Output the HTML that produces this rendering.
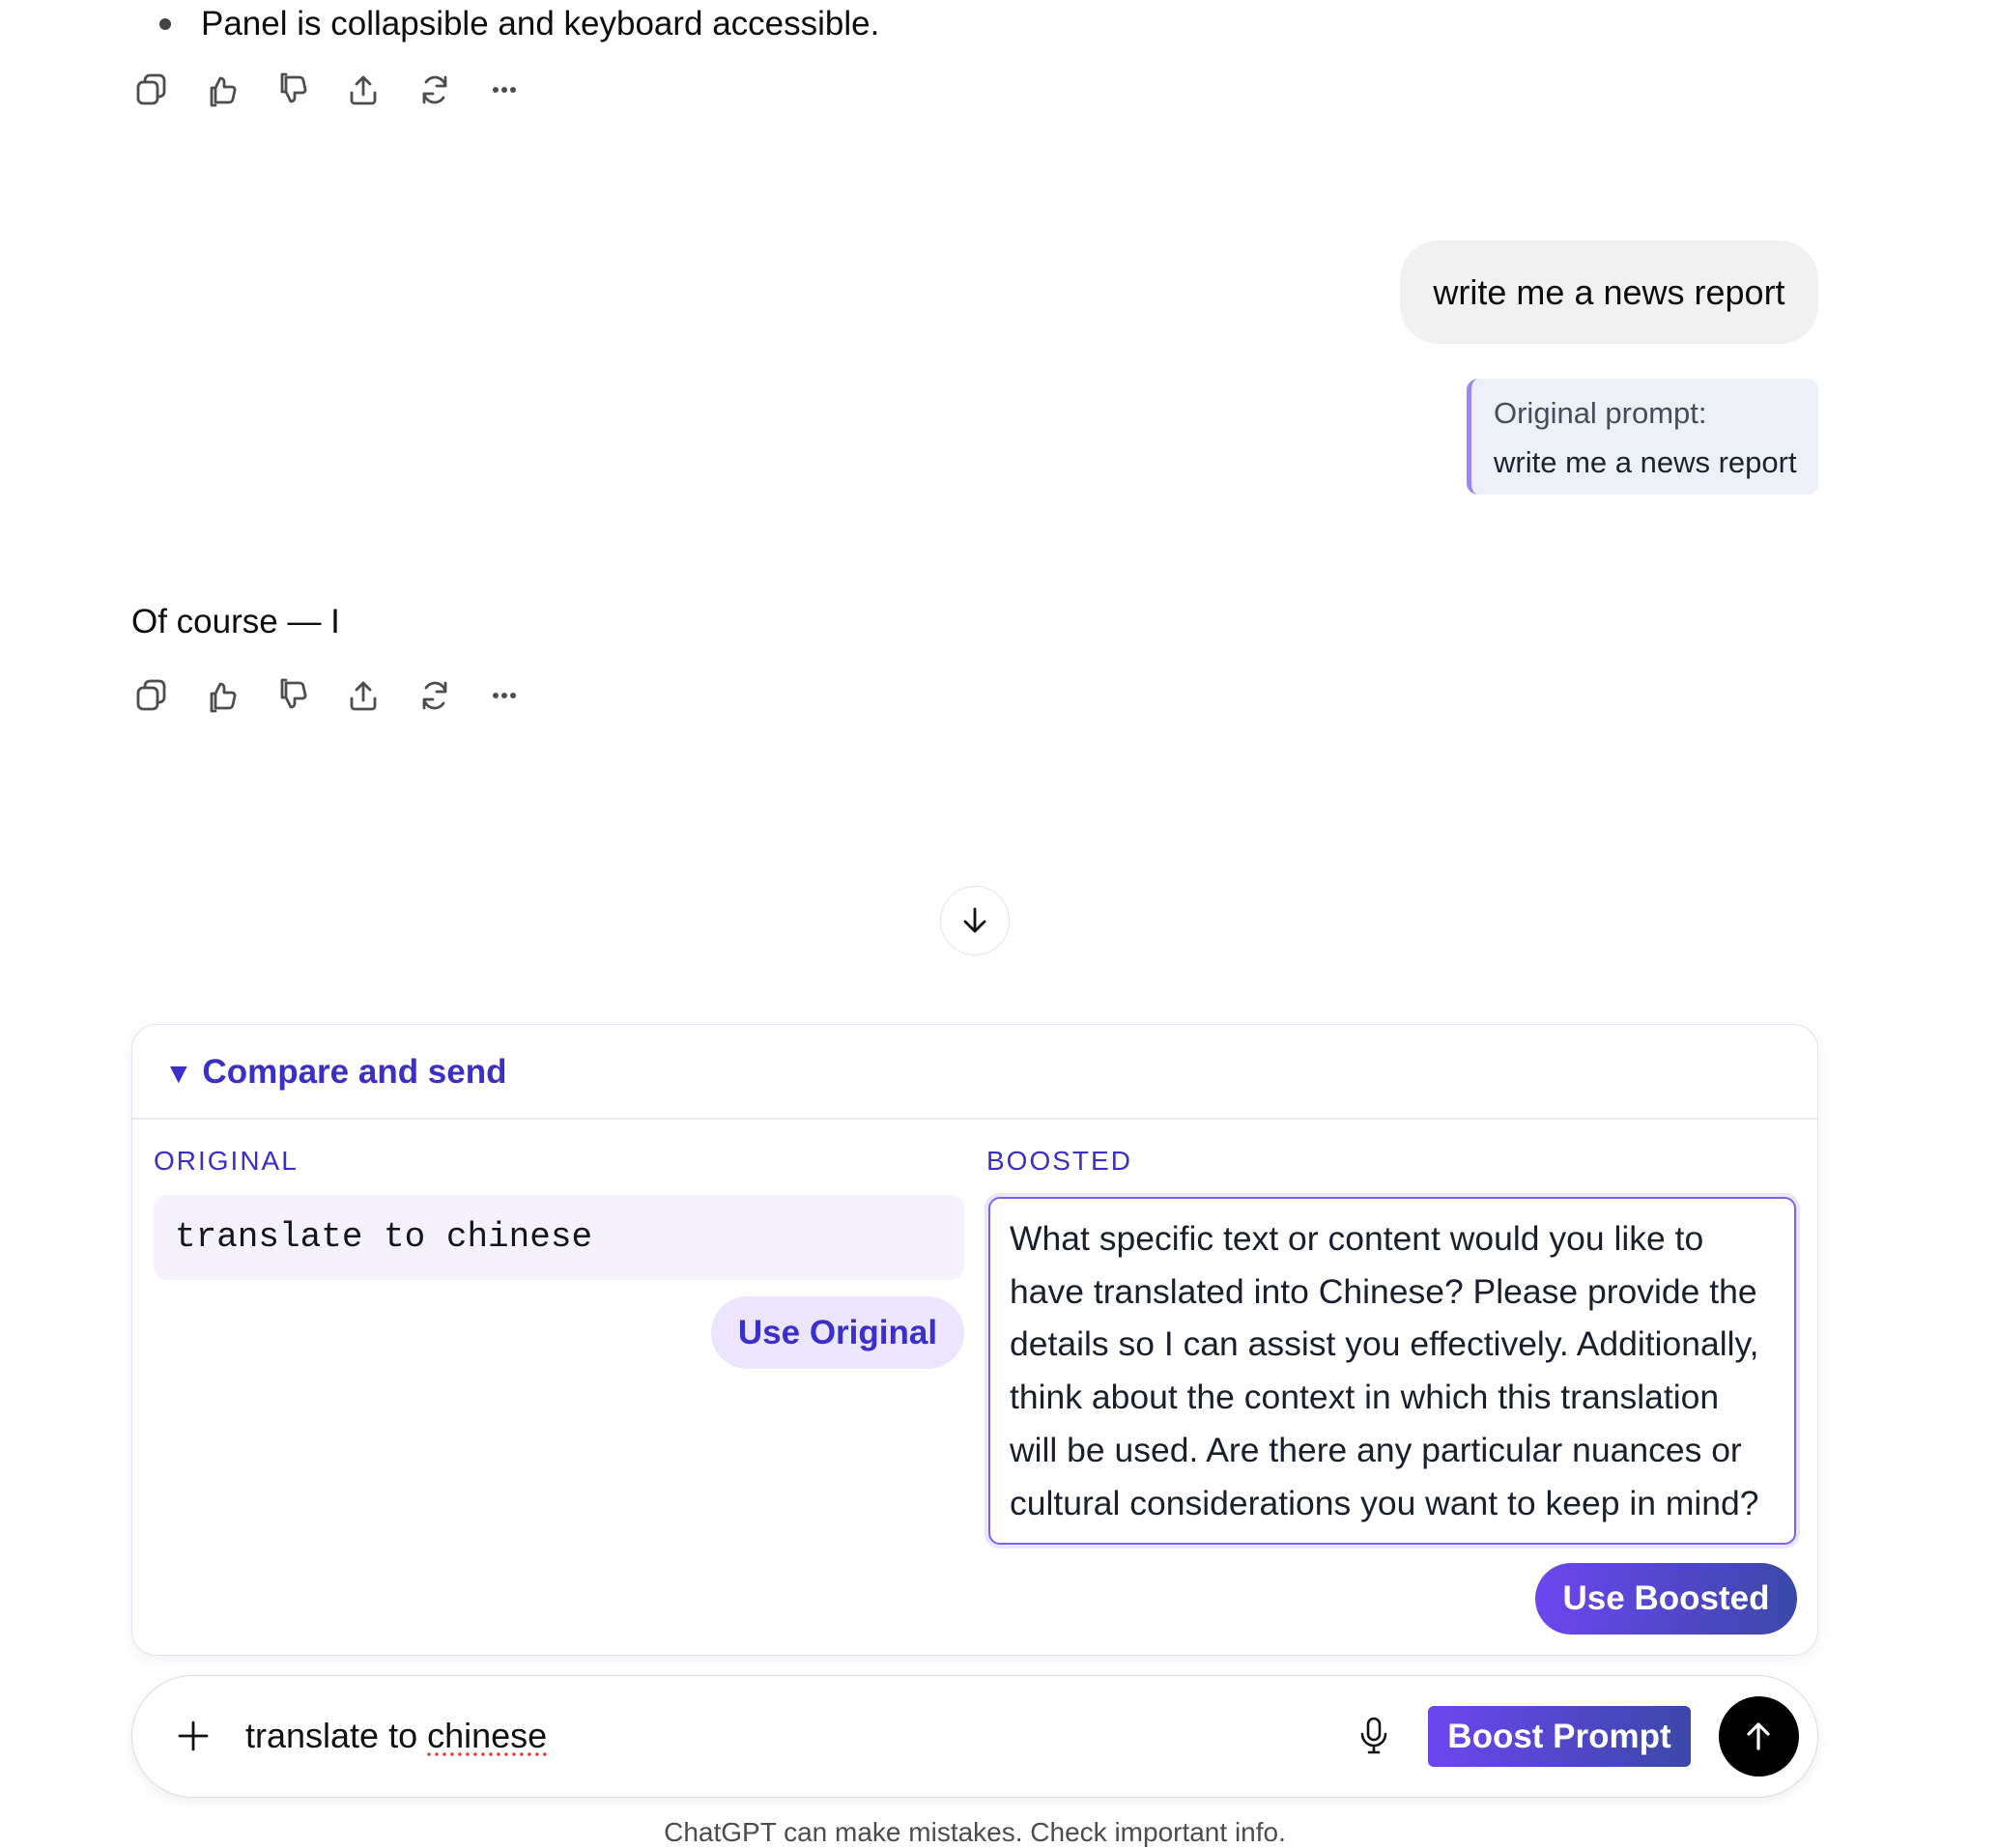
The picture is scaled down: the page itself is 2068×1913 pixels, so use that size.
<!DOCTYPE html>
<html><head><meta charset="utf-8"><style>
*{margin:0;padding:0;box-sizing:border-box}
body{width:2068px;height:1908px;background:#fff;font-family:"Liberation Sans",sans-serif;position:relative;overflow:hidden;color:#0d0d0d}
.a{position:absolute;white-space:nowrap}
.ic{position:absolute;width:38px;height:38px}
.ic svg{width:38px;height:38px;fill:none;stroke:#4d4d4d;stroke-width:2.8;stroke-linecap:round;stroke-linejoin:round}
</style></head><body>

<div class="a" style="left:165px;top:19px;width:12px;height:12px;border-radius:50%;background:#444"></div>
<div class="a" style="left:208px;top:5px;font-size:35px;line-height:40px">Panel is collapsible and keyboard accessible.</div>

<div id="r1"></div>

<div class="a" style="left:1449px;top:249px;width:433px;height:107px;border-radius:40px;background:#f1f1f1;font-size:36px;line-height:107px;text-align:center">write me a news report</div>

<div class="a" style="left:1518px;top:392px;width:364px;height:120px;border-radius:12px;background:#eef0f8;border-left:5px solid #9c86f2"></div>
<div class="a" style="left:1546px;top:410px;font-size:31px;line-height:36px;color:#454c5b">Original prompt:</div>
<div class="a" style="left:1546px;top:461px;font-size:31px;line-height:36px;color:#1c2230">write me a news report</div>

<div class="a" style="left:136px;top:624px;font-size:35px;line-height:40px">Of course — I</div>

<div class="a" style="left:973px;top:917px;width:72px;height:72px;border-radius:50%;border:1.5px solid #e3e3e3;background:#fff"></div>
<svg class="a" style="left:991px;top:935px" width="36" height="36" viewBox="0 0 36 36" fill="none" stroke="#111" stroke-width="2.8" stroke-linecap="round" stroke-linejoin="round"><path d="M18 6v23M8 19l10 10 10-10"/></svg>

<div class="a" style="left:136px;top:1060px;width:1746px;height:654px;border-radius:26px;border:1.5px solid #e4e2f3;background:#fff;box-shadow:0 4px 14px rgba(0,0,0,0.06)"></div>
<div class="a" style="left:137px;top:1157px;width:1744px;height:1.5px;background:#e9e7f7"></div>
<div class="a" style="left:170px;top:1089px;font-size:35px;line-height:42px;font-weight:bold;color:#3a2fc8"><span style="font-size:30px">▼</span> Compare and send</div>
<div class="a" style="left:159px;top:1186px;font-size:28px;line-height:32px;letter-spacing:2px;color:#3a2fc8">ORIGINAL</div>
<div class="a" style="left:1021px;top:1186px;font-size:28px;line-height:32px;letter-spacing:2px;color:#3a2fc8">BOOSTED</div>

<div class="a" style="left:159px;top:1237px;width:839px;height:88px;border-radius:14px;background:#f5f2fe"></div>
<div class="a" style="left:181px;top:1259px;font-family:'Liberation Mono',monospace;font-size:36px;line-height:44px;color:#15151f">translate to chinese</div>
<div class="a" style="left:736px;top:1342px;width:262px;height:75px;border-radius:38px;background:#ebe6fd;color:#3a2fc8;font-weight:bold;font-size:35px;line-height:75px;text-align:center">Use Original</div>

<div class="a" style="left:1019px;top:1235px;width:844px;height:368px;border-radius:15px;background:#ebe6fd"></div>
<div class="a" style="left:1023px;top:1239px;width:836px;height:360px;border-radius:12px;border:2px solid #7665ee;background:#fff"></div>
<div class="a" style="left:1045px;top:1255px;font-size:35.5px;line-height:54.7px;color:#1b1f2d">What specific text or content would you like to<br>have translated into Chinese? Please provide the<br>details so I can assist you effectively. Additionally,<br>think about the context in which this translation<br>will be used. Are there any particular nuances or<br>cultural considerations you want to keep in mind?</div>
<div class="a" style="left:1589px;top:1618px;width:271px;height:74px;border-radius:37px;background:linear-gradient(90deg,#6c46f0,#3a48a8);color:#fff;font-weight:bold;font-size:35px;line-height:74px;text-align:center">Use Boosted</div>

<div class="a" style="left:136px;top:1734px;width:1746px;height:127px;border-radius:64px;border:1.5px solid #dcdcdc;background:#fff;box-shadow:0 4px 12px rgba(0,0,0,0.07)"></div>
<svg class="a" style="left:182px;top:1779px" width="36" height="36" viewBox="0 0 36 36" stroke="#111" stroke-width="2.8" stroke-linecap="round"><path d="M18 4v28M4 18h28"/></svg>
<div class="a" style="left:254px;top:1776px;font-size:36px;line-height:42px;color:#111">translate to <span style="text-decoration:underline dotted #e04040;text-underline-offset:6px">chinese</span></div>
<svg class="a" style="left:1404px;top:1776px" width="36" height="42" viewBox="0 0 36 42" fill="none" stroke="#111" stroke-width="2.6" stroke-linecap="round"><rect x="12" y="3" width="12" height="22" rx="6"/><path d="M6 19a12 12 0 0 0 24 0M18 31v7M13 38h10"/></svg>
<div class="a" style="left:1478px;top:1766px;width:272px;height:63px;border-radius:6px;background:linear-gradient(90deg,#6c46f0,#3a48a8);color:#fff;font-weight:bold;font-size:35px;line-height:63px;text-align:center">Boost Prompt</div>
<div class="a" style="left:1779px;top:1756px;width:83px;height:83px;border-radius:50%;background:#000"></div>
<svg class="a" style="left:1802px;top:1779px" width="36" height="36" viewBox="0 0 36 36" fill="none" stroke="#fff" stroke-width="3.2" stroke-linecap="round" stroke-linejoin="round"><path d="M18 31V6M8 16L18 6l10 10"/></svg>

<div class="a" style="left:0;width:2018px;top:1881px;font-size:28px;line-height:32px;color:#4d4d4d;text-align:center">ChatGPT can make mistakes. Check important info.</div>

<script>
var icons=[
'<rect x="5" y="11" width="20" height="22" rx="5"/><path d="M12 11V9a5 5 0 0 1 5-5h10a5 5 0 0 1 5 5v12a5 5 0 0 1-5 5h-2"/>',
'<path d="M11 17l5-10c3 0 4 2 4 4v5h8a3 3 0 0 1 3 3.5l-2 9a4 4 0 0 1-4 3.5H11zM11 17H7v18h4"/>',
'<path d="M11 21l5 10c3 0 4-2 4-4v-5h8a3 3 0 0 0 3-3.5l-2-9A4 4 0 0 0 25 6H11zM11 21H7V3h4"/>',
'<path d="M19 24V6M12 13l7-7 7 7M7 22v8a3 3 0 0 0 3 3h18a3 3 0 0 0 3-3v-8"/>',
'<path d="M30 15a11 11 0 0 0-20-4M8 23a11 11 0 0 0 20 4M30 6v9h-9M8 32v-9h9"/>',
'<circle cx="10" cy="19" r="1.6" fill="#4d4d4d"/><circle cx="19" cy="19" r="1.6" fill="#4d4d4d"/><circle cx="28" cy="19" r="1.6" fill="#4d4d4d"/>'];
var xs=[138,212,285,357,431,503],ys=[74,701],h='';
ys.forEach(function(y){xs.forEach(function(x,i){h+='<div class="ic" style="left:'+x+'px;top:'+y+'px"><svg viewBox="0 0 38 38">'+icons[i]+'</svg></div>';});});
document.getElementById('r1').innerHTML=h;
</script>
</body></html>
